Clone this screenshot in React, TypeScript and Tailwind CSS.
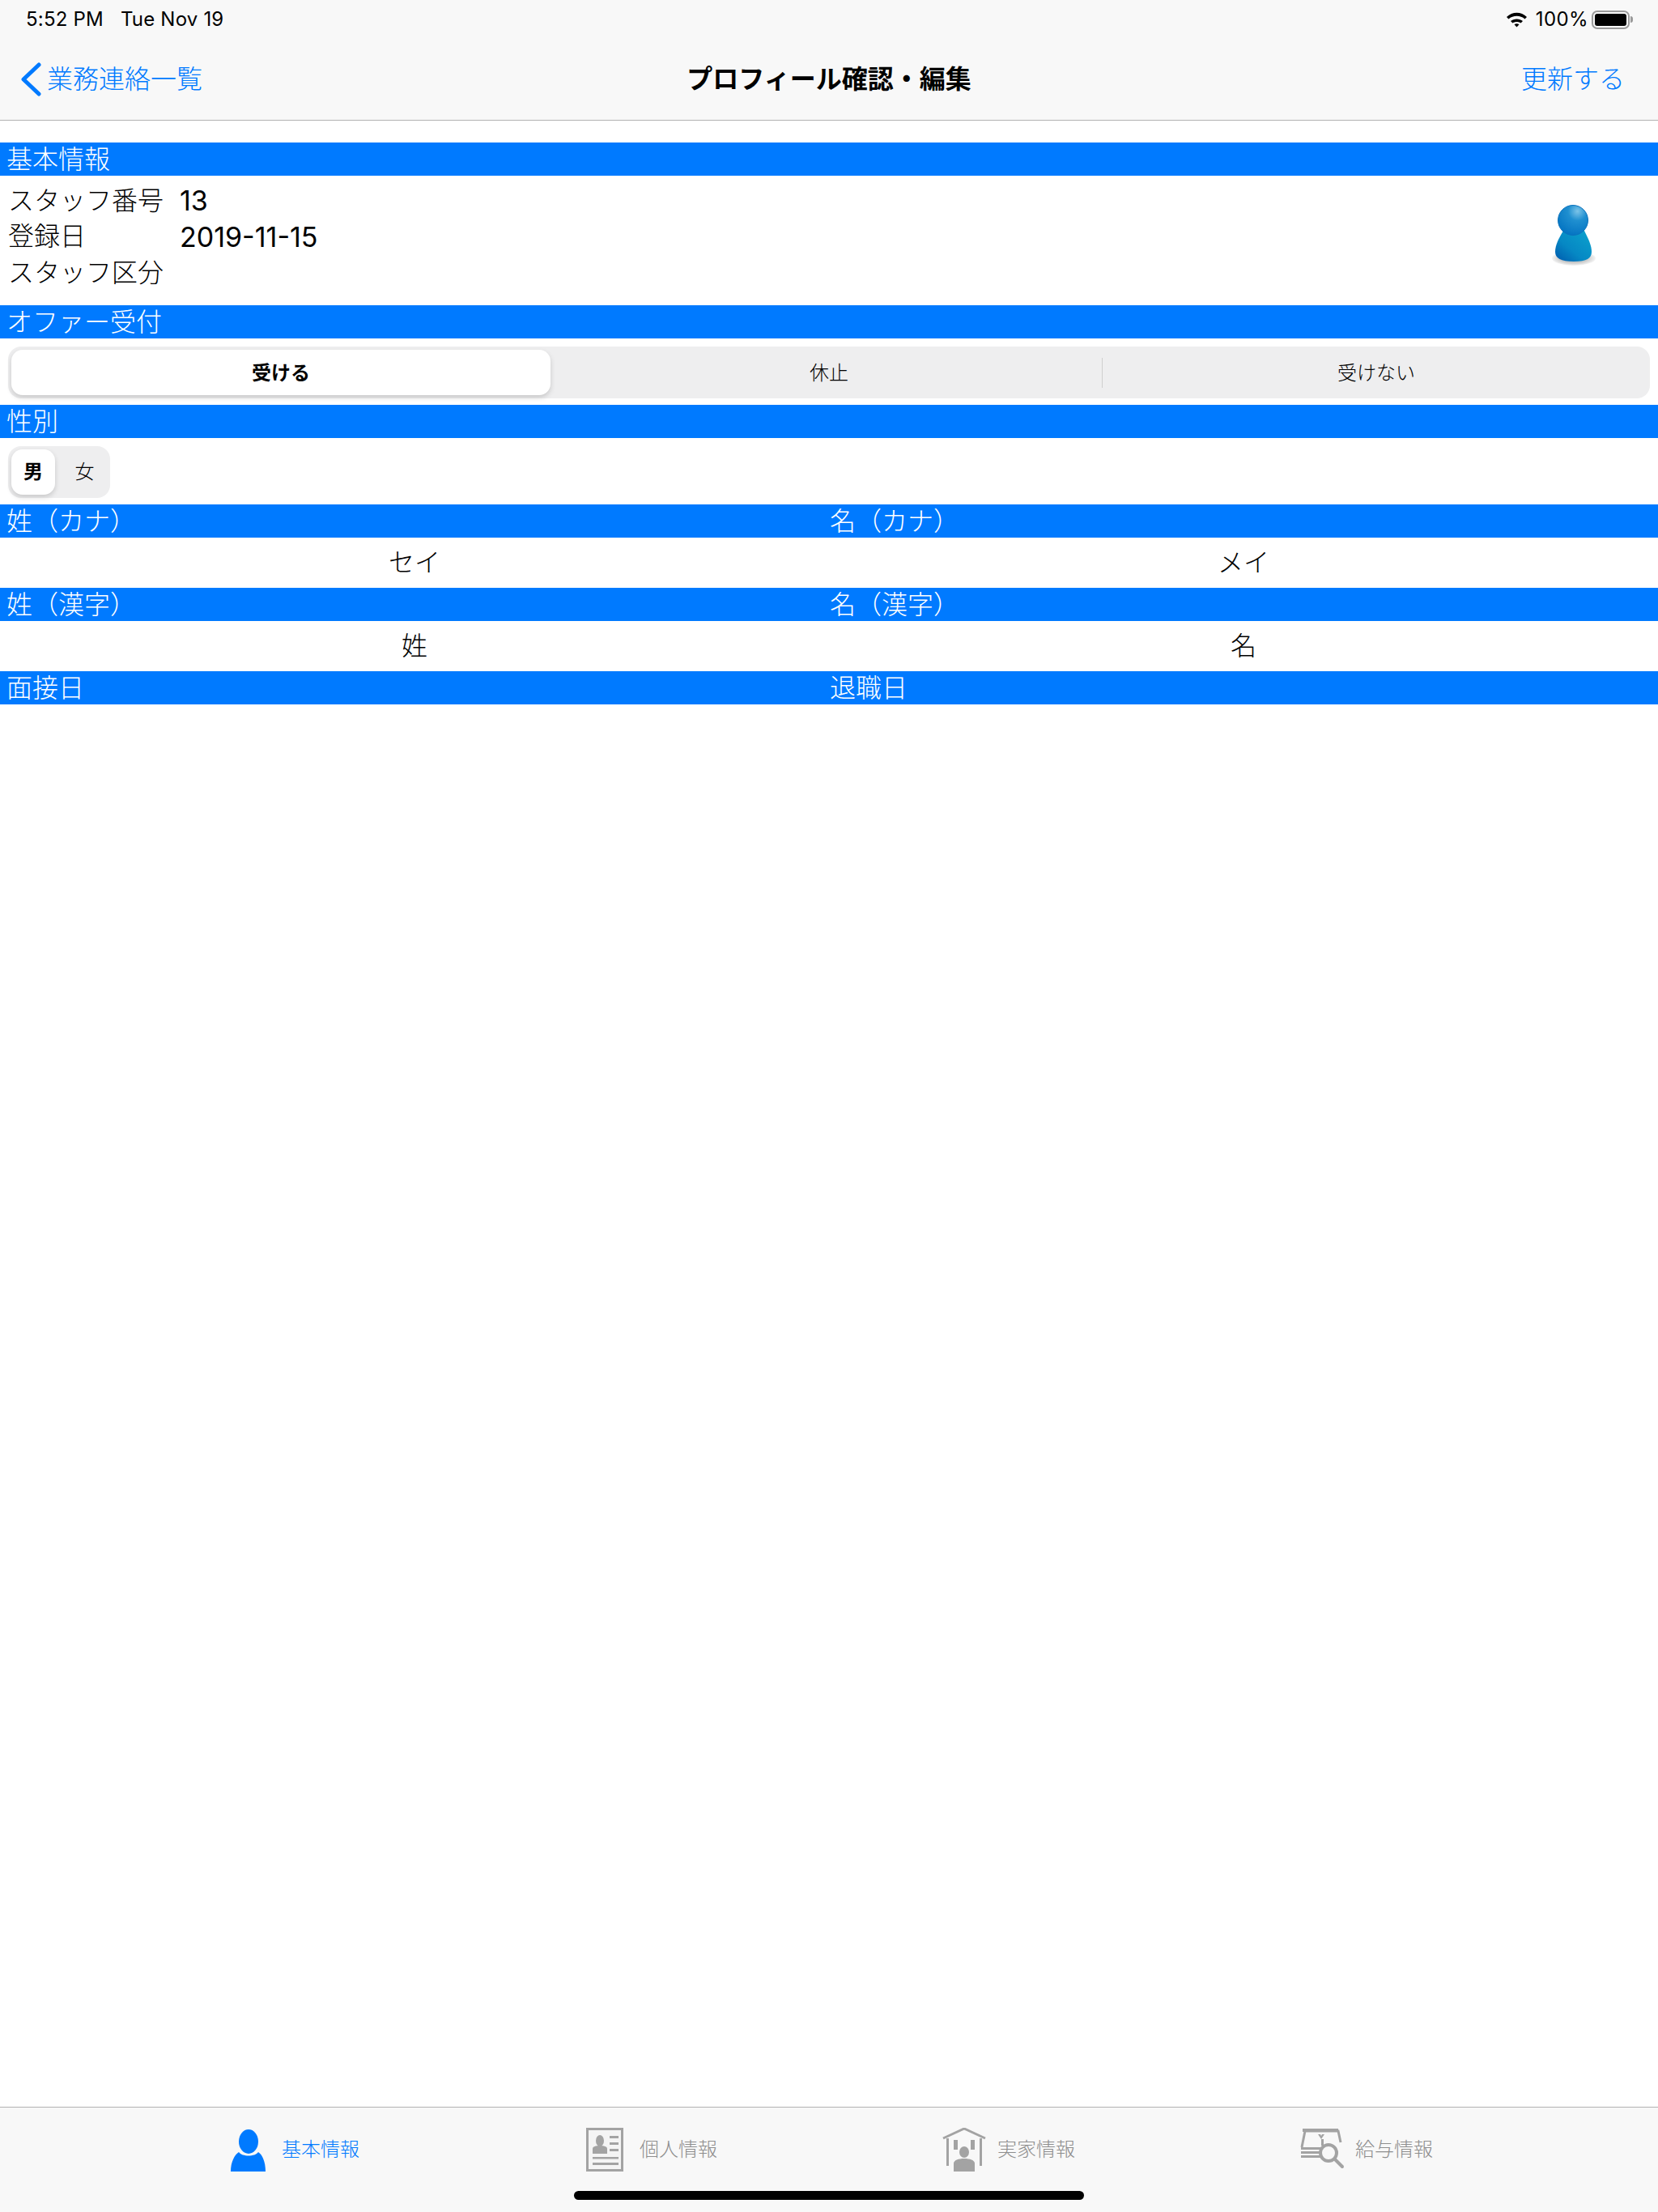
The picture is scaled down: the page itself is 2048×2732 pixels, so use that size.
const jp = "font-['Inter','Noto_Sans_CJK_JP',sans-serif]";

function SectionBar({ left, right }: { left: string; right?: string }) {
  return (
    <div className="grid h-[41px] grid-cols-2 bg-[#007aff] text-[32px] font-light leading-[41px] text-white">
      <div className="pl-[8px]">{left}</div>
      {right && <div className="pl-[1px]">{right}</div>}
    </div>
  );
}

function Avatar() {
  return (
    <svg width="56" height="78" viewBox="0 0 56 78">
      <defs>
        <radialGradient id="head" cx="0.65" cy="0.2" r="0.9">
          <stop offset="0" stopColor="#7cc4e8" />
          <stop offset="0.35" stopColor="#1f8fd0" />
          <stop offset="1" stopColor="#0070c0" />
        </radialGradient>
        <linearGradient id="body" x1="0.9" y1="0.2" x2="0.1" y2="1">
          <stop offset="0" stopColor="#0a9ccb" />
          <stop offset="0.55" stopColor="#0688c4" />
          <stop offset="1" stopColor="#005fb0" />
        </linearGradient>
        <radialGradient id="shadow">
          <stop offset="0.6" stopColor="#c8c8c8" />
          <stop offset="1" stopColor="#f4f4f4" />
        </radialGradient>
      </defs>
      <ellipse cx="28" cy="66" rx="27" ry="9" fill="url(#shadow)" />
      <path d="M15 32 C9 42 5 50 5 58 C5 66 12 70 28 70 C44 70 50 66 50 58 C50 50 46 42 41 32 Z" fill="url(#body)" />
      <circle cx="27" cy="19" r="18.5" fill="url(#head)" stroke="#0a72bd" strokeWidth="1" />
    </svg>
  );
}

function UserIcon({ color }: { color: string }) {
  return (
    <svg width="60" height="54" viewBox="0 0 60 54">
      <ellipse cx="27" cy="17" rx="12" ry="15" fill={color} />
      <path d="M15 30 C19 36 35 36 39 30 C44 33 48 42 48 54 H5 C5 42 10 33 15 30 Z" fill={color} />
    </svg>
  );
}

function CardIcon() {
  return (
    <svg width="60" height="54" viewBox="0 0 60 54" fill="#a3a3a3">
      <rect x="3.5" y="1.5" width="43" height="51" fill="#f4f4f4" stroke="#a3a3a3" strokeWidth="3" />
      <ellipse cx="19" cy="16" rx="5" ry="7" />
      <path d="M10 32 V26 C10 23 14 22 19 22 C24 22 28 23 28 26 V32 Z" />
      <rect x="31" y="10" width="11" height="3" />
      <rect x="31" y="18" width="11" height="3" />
      <rect x="31" y="26" width="11" height="3" />
      <rect x="10" y="36" width="32" height="2.5" />
      <rect x="10" y="43" width="32" height="3" />
    </svg>
  );
}

function HouseIcon() {
  return (
    <svg width="60" height="54" viewBox="0 0 60 54" fill="#a3a3a3">
      <path d="M1 13 L27 1 L53 13" fill="none" stroke="#a3a3a3" strokeWidth="3" />
      <rect x="5" y="13" width="3" height="34" />
      <rect x="46" y="13" width="3" height="34" />
      <rect x="14" y="15" width="5" height="12" />
      <rect x="35" y="15" width="5" height="12" />
      <ellipse cx="27" cy="30" rx="6" ry="7" />
      <path d="M14 54 V44 C14 40 20 38 27 38 C34 38 40 40 40 44 V54 Z" />
    </svg>
  );
}

function SalaryIcon() {
  return (
    <svg width="60" height="54" viewBox="0 0 60 54" fill="#a3a3a3">
      <path d="M2 24 L6 4 H47 L50 18" fill="none" stroke="#a3a3a3" strokeWidth="3" />
      <rect x="3" y="1" width="44" height="4" />
      <path d="M22 8 L26 14 L30 8 H27 L26 10 L25 8 Z" />
      <rect x="26" y="14" width="3" height="8" />
      <rect x="1" y="24" width="24" height="3" />
      <rect x="1" y="29" width="24" height="3" />
      <rect x="1" y="34" width="24" height="3" />
      <circle cx="35" cy="31" r="10" fill="#f8f8f8" stroke="#a3a3a3" strokeWidth="4" />
      <path d="M43 39 L52 48" stroke="#a3a3a3" strokeWidth="4" strokeLinecap="round" />
    </svg>
  );
}

const tabs = [
  { label: "基本情報", icon: <UserIcon color="#007aff" />, color: "text-[#007aff]" },
  { label: "個人情報", icon: <CardIcon />, color: "text-[#8e8e8e]" },
  { label: "実家情報", icon: <HouseIcon />, color: "text-[#8e8e8e]" },
  { label: "給与情報", icon: <SalaryIcon />, color: "text-[#8e8e8e]" },
];

export default function App() {
  return (
    <div className={`flex h-[2732px] w-[2048px] flex-col bg-white text-black ${jp}`}>
      <header className="h-[149px] border-b border-[#b2b2b2] bg-[#f8f8f8]">
        <div className="flex h-[48px] items-center justify-between pl-[32px] pr-[31px] text-[24px] tracking-[0.2px]">
          <div className="flex gap-[21px]">
            <span>5:52 PM</span>
            <span>Tue Nov 19</span>
          </div>
          <div className="flex items-center">
            <svg width="27" height="20" viewBox="0 0 27 20">
              <path d="M1 7 C8 0 19 0 26 7 L23.5 9.5 C18 4.5 9 4.5 3.5 9.5 Z" fill="#000" />
              <path d="M6 12 C10 8.5 17 8.5 21 12 L18.5 14.5 C16 12.5 11 12.5 8.5 14.5 Z" fill="#000" />
              <path d="M10.5 16.2 C12.5 15 14.5 15 16.5 16.2 L13.5 19.5 Z" fill="#000" />
            </svg>
            <span className="ml-[10px] tracking-[0.4px]">100%</span>
            <div className="ml-[4px] flex items-center">
              <div className="h-[23px] w-[47px] rounded-[7px] border-2 border-[#9a9a9a] p-[2px]">
                <div className="h-full rounded-[3px] bg-black" />
              </div>
              <div className="ml-[1px] h-[8px] w-[3px] rounded-r-full bg-[#9a9a9a]" />
            </div>
          </div>
        </div>
        <div className="relative flex h-[100px] items-center justify-between pl-[25px] pr-[41px] text-[32px] font-light text-[#007aff]">
          <div className="flex items-center gap-[7px]">
            <svg width="26" height="42" viewBox="0 0 26 42">
              <path d="M23 3 L4 21 L23 39" fill="none" stroke="#007aff" strokeWidth="5" strokeLinecap="round" strokeLinejoin="round" />
            </svg>
            <span>業務連絡一覧</span>
          </div>
          <span className="absolute inset-x-0 text-center font-bold text-black">プロフィール確認・編集</span>
          <span>更新する</span>
        </div>
      </header>

      <div className="flex-1 pt-[27px]">
        <SectionBar left="基本情報" />
        <div className="flex h-[160px] justify-between pl-[10px] pr-[76px] pt-[9px]">
          <div className="grid grid-cols-[212px_auto] content-start text-[32px] font-light leading-[44px]">
            <span>スタッフ番号</span>
            <span className="text-[34px] font-normal">13</span>
            <span>登録日</span>
            <span className="pt-[1px] text-[34px] font-normal">2019-11-15</span>
            <span>スタッフ区分</span>
          </div>
          <div className="pt-[27px]">
            <Avatar />
          </div>
        </div>

        <SectionBar left="オファー受付" />
        <div className="h-[82px] px-[10px] pt-[10px]">
          <div className="grid h-[64px] grid-cols-3 items-center rounded-[16px] bg-[#eeeeef] text-center text-[24px] font-light">
            <div className="ml-[4px] mr-[6px] flex h-[56px] items-center justify-center rounded-[14px] bg-white pt-[1px] font-bold shadow-[0_3px_6px_rgba(0,0,0,0.16)]">
              受ける
            </div>
            <div className="pt-[1px]">休止</div>
            <div className="-ml-[1px] border-l border-[#cfcfcf] pt-[1px] leading-[36px]">受けない</div>
          </div>
        </div>

        <SectionBar left="性別" />
        <div className="h-[82px] px-[10px] pt-[10px]">
          <div className="grid h-[64px] w-[126px] grid-cols-2 items-center rounded-[16px] bg-[#eeeeef] text-center text-[24px] font-light">
            <div className="ml-[4px] flex h-[56px] w-[54px] items-center justify-center rounded-[14px] bg-white font-bold shadow-[0_3px_6px_rgba(0,0,0,0.16)]">
              男
            </div>
            <div>女</div>
          </div>
        </div>

        <SectionBar left="姓（カナ）" right="名（カナ）" />
        <div className="grid h-[62px] grid-cols-2 items-center text-center text-[32px] font-light">
          <div>セイ</div>
          <div>メイ</div>
        </div>

        <SectionBar left="姓（漢字）" right="名（漢字）" />
        <div className="grid h-[62px] grid-cols-2 items-center text-center text-[32px] font-light">
          <div>姓</div>
          <div>名</div>
        </div>

        <SectionBar left="面接日" right="退職日" />
      </div>

      <footer className="h-[130px] border-t border-[#b2b2b2] bg-[#f8f8f8]">
        <div className="grid h-[103px] grid-cols-[repeat(4,442px)] items-center pl-[280px]">
          {tabs.map((tab) => (
            <div key={tab.label} className="flex items-center gap-[8px]">
              {tab.icon}
              <span className={`text-[24px] font-light ${tab.color}`}>{tab.label}</span>
            </div>
          ))}
        </div>
        <div className="mx-auto h-[11px] w-[630px] rounded-full bg-black" />
      </footer>
    </div>
  );
}
